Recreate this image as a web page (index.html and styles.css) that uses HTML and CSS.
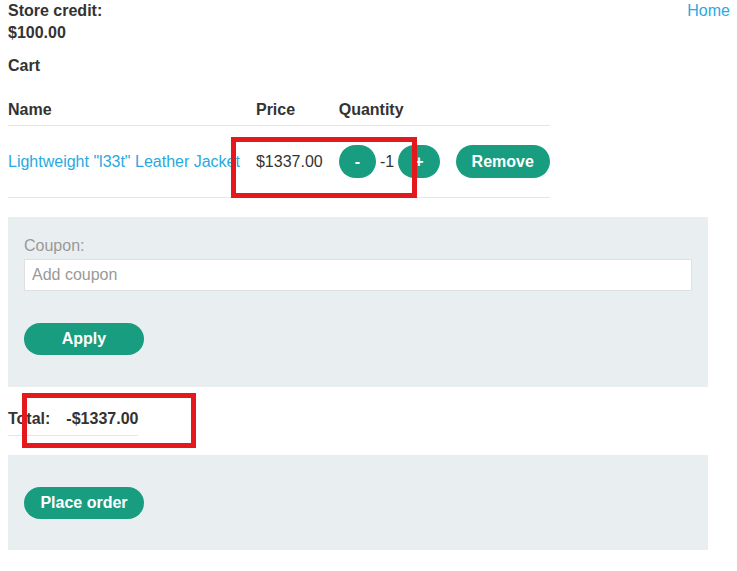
FILE: index.html
```html
<!DOCTYPE html>
<html>
	<head>
		<meta charset="utf-8">
		<title>Cart</title>
		<link rel="stylesheet" href="styles.css">
	</head>

	<body>
		<div class="page">
			<div class="top-bar">
				<div class="credit">Store credit:<br>$100.00</div>
				<a class="link" href="#">Home</a>
			</div>

			<div class="cart-title">Cart</div>

			<table class="cart-table">
				<tr>
					<th>Name</th>
					<th>Price</th>
					<th>Quantity</th>
					<th></th>
				</tr>
				<tr>
					<td><a class="link" href="#">Lightweight "l33t" Leather Jacket</a></td>
					<td>$1337.00</td>
					<td>
						<div class="qty">
							<button class="button">-</button>
							<span>-1</span>
							<button class="button">+</button>
						</div>
					</td>
					<td><button class="button">Remove</button></td>
				</tr>
			</table>

			<form class="panel coupon">
				<label class="coupon-label">Coupon:</label>
				<input class="coupon-input" type="text" placeholder="Add coupon">
				<button class="button wide" type="button">Apply</button>
			</form>

			<table class="total-table">
				<tr>
					<th>Total:</th>
					<th>-$1337.00</th>
				</tr>
			</table>

			<form class="panel checkout">
				<button class="button wide" type="button">Place order</button>
			</form>

			<!-- highlight marks -->
			<div class="mark mark-qty"></div>
			<div class="mark mark-total"></div>
		</div>
	</body>
</html>
```

FILE: styles.css
```css
body {
	margin: 0;
	background-color: #fff;
	color: #333332;
	font-family: "Liberation Sans", Arial, sans-serif;
	font-size: 16px;
	line-height: 22px;
}

.page {
	position: relative;
	padding: 0 7px 0 8px;
}

.link {
	color: #29a9e0;
	text-decoration: none;
}

.top-bar {
	display: flex;
	justify-content: space-between;
	align-items: flex-start;
}

.credit {
	font-weight: bold;
}

.cart-title {
	font-weight: bold;
	margin-top: 11px;
}

table {
	border-collapse: collapse;
	border-spacing: 0;
}

th, td {
	text-align: left;
	padding: 0 16px 0 0;
}

th:last-child, td:last-child {
	padding-right: 0;
}

.cart-table {
	margin-top: 20px;
}

.cart-table th {
	padding-top: 2px;
	padding-bottom: 4px;
	border-bottom: 1px solid #e6e6e6;
}

.cart-table td {
	padding-top: 19px;
	padding-bottom: 19px;
	border-bottom: 1px solid #e6e6e6;
	vertical-align: middle;
	white-space: nowrap;
}

.qty {
	display: flex;
	align-items: center;
	gap: 4px;
}

.button {
	height: 33px;
	padding: 0 16px;
	border: 0;
	border-radius: 20px;
	background-color: #189d80;
	color: #fff;
	font-family: "Liberation Sans", Arial, sans-serif;
	font-size: 16px;
	font-weight: bold;
	cursor: pointer;
}

.button.wide {
	height: 32px;
	min-width: 120px;
}

.panel {
	background-color: #e9eef1;
	width: 668px;
	margin: 0;
	padding: 32px 16px 31px;
}

.coupon {
	margin-top: 19px;
	padding-top: 18px;
	padding-bottom: 32px;
}

.coupon-label {
	display: block;
	color: #999;
}

.coupon-input {
	display: block;
	box-sizing: border-box;
	width: 668px;
	height: 32px;
	margin: 2px 0 32px;
	padding: 0 7px;
	border: 1px solid #e0e0e0;
	background: #fff;
	font-family: "Liberation Sans", Arial, sans-serif;
	font-size: 16px;
	color: #333332;
}

.coupon-input::placeholder {
	color: #999;
}

.total-table {
	margin-top: 15px;
}

.total-table th {
	padding-top: 6px;
	padding-bottom: 5px;
	border-bottom: 1px solid #e6e6e6;
}

.checkout {
	margin-top: 19px;
}

.mark {
	position: absolute;
	border: 5px solid #e3191e;
	box-sizing: border-box;
}

.mark-qty {
	left: 231px;
	top: 137px;
	width: 186px;
	height: 61px;
}

.mark-total {
	left: 22px;
	top: 393px;
	width: 174px;
	height: 55px;
}
```
